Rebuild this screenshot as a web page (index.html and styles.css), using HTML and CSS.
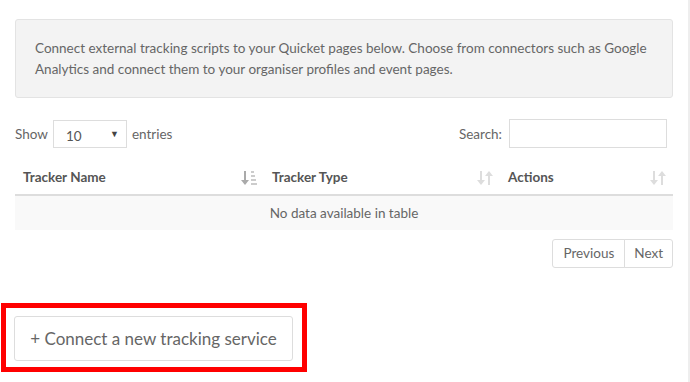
FILE: index.html
```html
<!DOCTYPE html>
<html lang="en">
<head>
    <meta charset="UTF-8">
    <title>Tracking connectors</title>
    <link rel="stylesheet" href="styles.css">
</head>
<body>
    <div class="panel">
        <div class="info-box">
            Connect external tracking scripts to your Quicket pages below. Choose from connectors such as Google
            Analytics and connect them to your organiser profiles and event pages.
        </div>

        <div class="table-controls">
            <label class="length">
                Show
                <span class="select">10 <span class="caret">&#9660;</span></span>
                entries
            </label>
            <label class="search">
                Search:
                <span class="search-input"></span>
            </label>
        </div>

        <table class="data-table">
            <thead>
                <tr>
                    <th class="col-name">
                        <span>Tracker Name</span>
                        <svg class="sort-icon" width="16" height="14" viewBox="0 0 16 14">
                            <!-- sorted: arrow down + bars -->
                            <rect x="3" y="0" width="2" height="10" fill="#aaa"/>
                            <path d="M0 9 L8 9 L4 14 Z" fill="#aaa"/>
                            <rect x="10" y="0" width="3" height="2" fill="#ccc"/>
                            <rect x="10" y="4" width="4" height="2" fill="#ccc"/>
                            <rect x="10" y="8" width="5" height="2" fill="#ccc"/>
                            <rect x="10" y="12" width="6" height="2" fill="#ccc"/>
                        </svg>
                    </th>
                    <th class="col-type">
                        <span>Tracker Type</span>
                        <svg class="sort-icon" width="16" height="14" viewBox="0 0 16 14">
                            <rect x="3" y="0" width="2" height="10" fill="#ddd"/>
                            <path d="M0 9 L8 9 L4 14 Z" fill="#ddd"/>
                            <rect x="11" y="4" width="2" height="10" fill="#ddd"/>
                            <path d="M8 5 L16 5 L12 0 Z" fill="#ddd"/>
                        </svg>
                    </th>
                    <th class="col-actions">
                        <span>Actions</span>
                        <svg class="sort-icon" width="16" height="14" viewBox="0 0 16 14">
                            <rect x="3" y="0" width="2" height="10" fill="#ddd"/>
                            <path d="M0 9 L8 9 L4 14 Z" fill="#ddd"/>
                            <rect x="11" y="4" width="2" height="10" fill="#ddd"/>
                            <path d="M8 5 L16 5 L12 0 Z" fill="#ddd"/>
                        </svg>
                    </th>
                </tr>
            </thead>
            <tbody>
                <tr>
                    <td colspan="3" class="empty">No data available in table</td>
                </tr>
            </tbody>
        </table>

        <div class="pager">
            <span class="page-btn">Previous</span>
            <span class="page-btn">Next</span>
        </div>

        <div class="highlight">
            <button class="connect-btn">+ Connect a new tracking service</button>
        </div>
    </div>
</body>
</html>
```

FILE: styles.css
```css
body {
    margin: 0;
    font-family: Lato, "Open Sans", sans-serif;
    font-size: 13.5px;
    color: #666;
    background-color: #fff;
    overflow: hidden;
}

.panel {
    width: 690px;
    height: 382px;
    padding: 19px 0 0 15px;
    box-sizing: border-box;
    border-right: 2px solid #eee;
}

.info-box {
    width: 658px;
    box-sizing: border-box;
    background-color: #f3f3f3;
    border: 1px solid #e3e3e3;
    border-radius: 3px;
    padding: 18px 19px 17px 19px;
    line-height: 21px;
}

.table-controls {
    width: 658px;
    display: flex;
    justify-content: space-between;
    align-items: center;
    margin-top: 21px;
    height: 29px;
}

.length,
.search {
    display: flex;
    align-items: center;
    gap: 5px;
}

.select {
    width: 74px;
    height: 28px;
    box-sizing: border-box;
    border: 1px solid #ddd;
    padding: 4px 7px 0 12px;
    display: flex;
    align-items: center;
    justify-content: space-between;
    color: #555;
}

.caret {
    font-size: 9px;
    color: #444;
    margin-top: -4px;
}

.search {
    gap: 7px;
    margin-right: 6px;
}

.search-input {
    width: 158px;
    height: 29px;
    box-sizing: border-box;
    border: 1px solid #ddd;
}

.data-table {
    width: 658px;
    border-collapse: collapse;
    margin-top: 11px;
}

.data-table th {
    height: 35px;
    padding: 0 7px 0 8px;
    border-bottom: 2px solid #ddd;
    font-weight: bold;
    color: #555;
    text-align: left;
}

.data-table th span {
    display: inline-block;
    padding-top: 1px;
}

.col-name { width: 234px; }
.col-type { width: 221px; }

.sort-icon {
    float: right;
    margin-top: 3px;
}

.empty {
    height: 34px;
    background-color: #f9f9f9;
    text-align: center;
    padding: 0;
}

.pager {
    width: 658px;
    display: flex;
    justify-content: flex-end;
    margin-top: 9px;
}

.page-btn {
    border: 1px solid #ddd;
    padding: 5px 10px 6px 10px;
    line-height: 16px;
}

.page-btn:first-child {
    border-radius: 3px 0 0 3px;
}

.page-btn + .page-btn {
    margin-left: -1px;
    padding: 5px 9px 6px 9px;
    border-radius: 0 3px 3px 0;
}

.highlight {
    display: inline-block;
    margin: 35px 0 0 -14px;
    border: 5px solid #f00;
    padding: 8px 9px 6px 8px;
}

.connect-btn {
    width: 279px;
    height: 45px;
    background-color: #fff;
    border: 1px solid #ddd;
    border-radius: 3px;
    font-family: Lato, "Open Sans", sans-serif;
    font-size: 17px;
    color: #666;
    padding: 0;
    cursor: pointer;
}
```
